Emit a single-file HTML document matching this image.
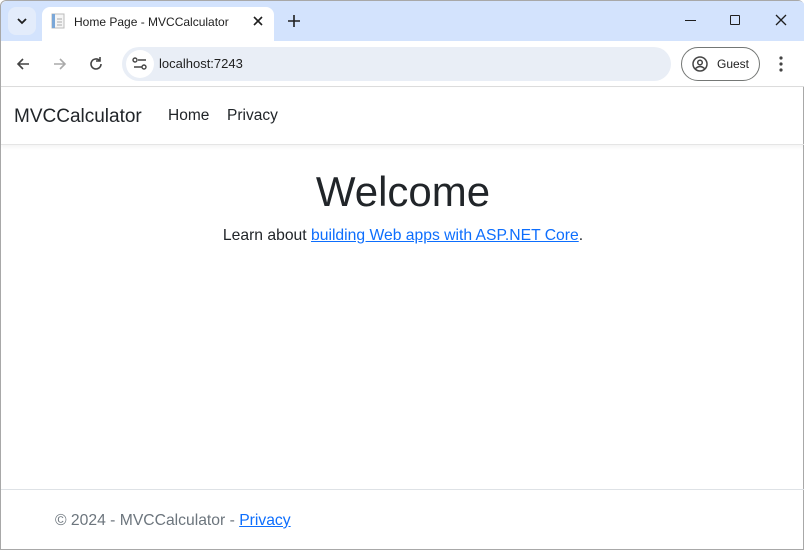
<!DOCTYPE html>
<html><head><style>
*{box-sizing:border-box;margin:0;padding:0}
body{width:804px;height:550px;overflow:hidden;background:#fff;font-family:"Liberation Sans",sans-serif;position:relative;border:1px solid #a8a8a8;border-radius:6px 6px 0 0}
.top{position:absolute;left:0;top:0;width:804px;height:40px;background:#d3e3fd;border-radius:6px 6px 0 0}
.tab{position:absolute;left:41px;top:6px;width:232px;height:34px;background:#fff;border-radius:8px 8px 0 0}
.abs{position:absolute}
.tb{position:absolute;left:0;top:40px;width:804px;height:46px;background:#fff;border-bottom:1px solid #dcdcdc}
.url{position:absolute;left:121px;top:6px;width:549px;height:34px;background:#e9eef6;border-radius:17px}
.nav{position:absolute;left:0;top:87px;width:804px;height:57px;border-bottom:1px solid #e5e5e5;box-shadow:0 2px 4px rgba(0,0,0,.05)}
</style></head><body>
<div class="top">
 <div class="abs" style="left:7px;top:6px;width:28px;height:28px;background:#e3ecfb;border-radius:8px"></div>
 <svg class="abs" style="left:15px;top:15px" width="12" height="10"><path d="M2 3l4 4 4-4" stroke="#1f1f1f" stroke-width="1.8" fill="none"/></svg>
 <div class="tab">
  <svg class="abs" style="left:9px;top:6px" width="14" height="16"><rect x="1" y="1" width="12" height="14" fill="#f5f5f5" stroke="#bbb"/><rect x="1" y="1" width="3" height="14" fill="#7aa7d8"/><path d="M6 6h5M6 9h5M6 12h5" stroke="#aaa"/></svg>
  <div class="abs" style="left:32px;top:8px;font-size:12px;color:#1f1f1f">Home Page - MVCCalculator</div>
  <svg class="abs" style="left:211px;top:9px" width="10" height="10"><path d="M1 1l8 8M9 1l-8 8" stroke="#1f1f1f" stroke-width="1.6"/></svg>
 </div>
 <svg class="abs" style="left:287px;top:14px" width="12" height="12"><path d="M6 0v12M0 6h12" stroke="#1f1f1f" stroke-width="1.6"/></svg>
 <div class="abs" style="left:684px;top:19px;width:11px;height:1px;background:#1f1f1f"></div>
 <div class="abs" style="left:729px;top:14px;width:10px;height:10px;border:1px solid #1f1f1f;border-radius:1px"></div>
 <svg class="abs" style="left:774px;top:13px" width="12" height="12"><path d="M1 1l10 10M11 1L1 11" stroke="#1f1f1f" stroke-width="1.3"/></svg>
</div>
<div class="tb">
 <svg class="abs" style="left:14px;top:15px" width="16" height="16"><path d="M14 8H3M8 3L3 8l5 5" stroke="#444" stroke-width="1.6" fill="none"/></svg>
 <svg class="abs" style="left:51px;top:15px" width="16" height="16"><path d="M2 8h11M8 3l5 5-5 5" stroke="#aaa" stroke-width="1.6" fill="none"/></svg>
 <svg class="abs" style="left:87px;top:15px" width="16" height="16"><path d="M13 8a5 5 0 1 1-1.5-3.6M12 1v4H8" stroke="#444" stroke-width="1.6" fill="none"/></svg>
 <div class="url">
  <div class="abs" style="left:4px;top:3px;width:28px;height:28px;background:#fff;border-radius:14px"></div>
  <svg class="abs" style="left:10px;top:10px" width="16" height="14"><circle cx="3" cy="3" r="2" stroke="#444" fill="none" stroke-width="1.4"/><path d="M6 3h8M2 10h8" stroke="#444" stroke-width="1.4"/><circle cx="12" cy="10" r="2" stroke="#444" fill="none" stroke-width="1.4"/></svg>
  <div class="abs" style="left:37px;top:9px;font-size:13px;color:#1f1f1f">localhost:7243</div>
 </div>
 <div class="abs" style="left:680px;top:6px;width:79px;height:34px;border:1px solid #747775;border-radius:17px"></div>
 <svg class="abs" style="left:691px;top:15px" width="16" height="16"><circle cx="8" cy="8" r="7" stroke="#444" stroke-width="1.5" fill="none"/><circle cx="8" cy="6.5" r="2.3" stroke="#444" stroke-width="1.5" fill="none"/><path d="M3.5 12.5q4.5-4 9 0" stroke="#444" stroke-width="1.5" fill="none"/></svg>
 <div class="abs" style="left:716px;top:16px;font-size:12px;color:#1f1f1f">Guest</div>
 <svg class="abs" style="left:777px;top:14px" width="6" height="18"><circle cx="3" cy="3" r="1.6" fill="#444"/><circle cx="3" cy="9" r="1.6" fill="#444"/><circle cx="3" cy="15" r="1.6" fill="#444"/></svg>
</div>
<div class="nav">
 <div class="abs" style="left:13px;top:18px;font-size:19px;color:#212529">MVCCalculator</div>
 <div class="abs" style="left:167px;top:19px;font-size:15.5px;color:#212529">Home</div>
 <div class="abs" style="left:226px;top:19px;font-size:15.5px;color:#212529">Privacy</div>
</div>
<div class="abs" style="left:0;width:804px;top:167px;text-align:center;font-size:42px;font-weight:300;color:#212529">Welcome</div>
<div class="abs" style="left:0;width:804px;top:226px;text-align:center;font-size:15.7px;color:#212529">Learn about <span style="color:#0d6efd;text-decoration:underline">building Web apps with ASP.NET Core</span>.</div>
<div class="abs" style="left:0;top:488px;width:804px;height:1px;background:#dee2e6"></div>
<div class="abs" style="left:54px;top:511px;font-size:15.7px;color:#6c757d">© 2024 - MVCCalculator - <span style="color:#0d6efd;text-decoration:underline">Privacy</span></div>
</body></html>
